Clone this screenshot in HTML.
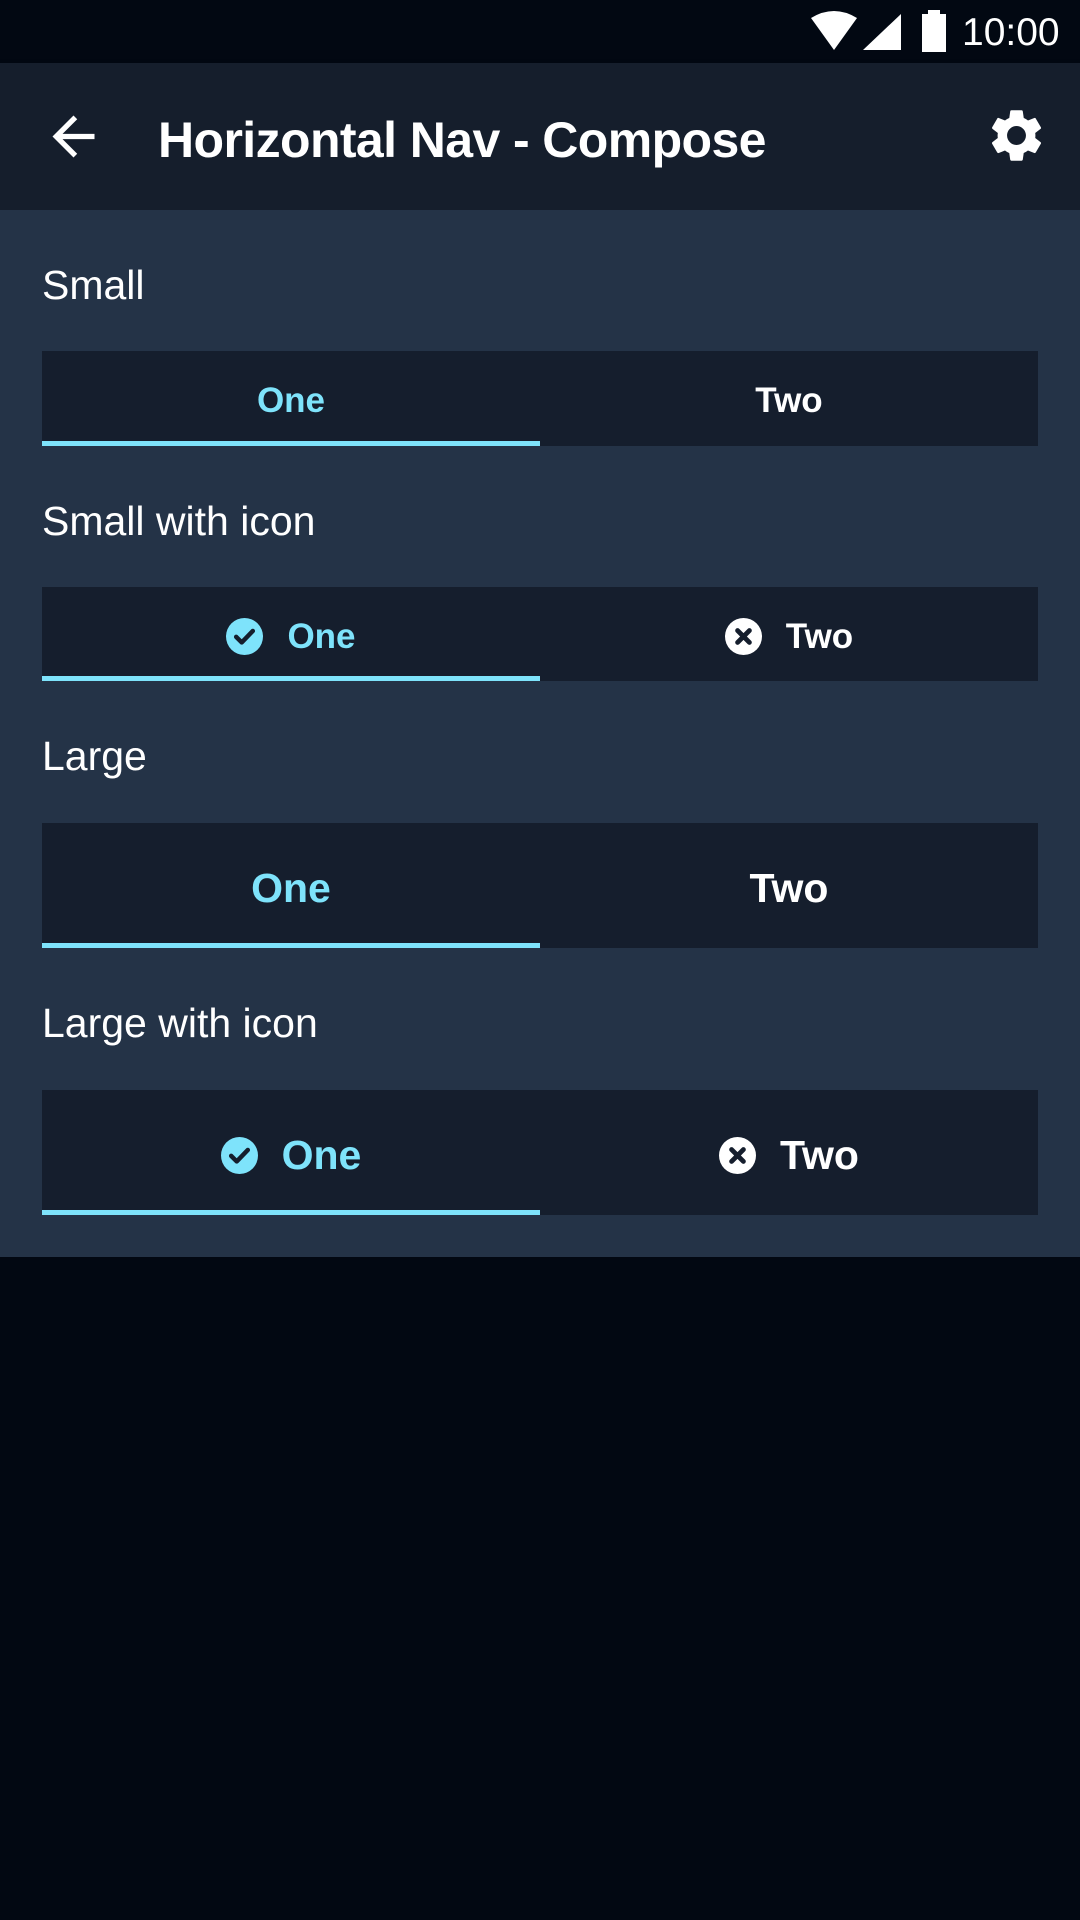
<!DOCTYPE html>
<html><head><meta charset="utf-8"><style>
*{margin:0;padding:0;box-sizing:border-box}
body{width:1080px;height:1920px;background:#020812;position:relative;overflow:hidden;font-family:"Liberation Sans",sans-serif;color:#fff}
.abs{position:absolute}
.content{left:0;top:210px;width:1080px;height:1047px;background:#243347}
.appbar{left:0;top:63px;width:1080px;height:147px;background:#151e2c;box-shadow:0 3px 6px rgba(0,0,0,.35)}
.label{position:absolute;left:42px;font-size:41px;line-height:50px}
.tabs{position:absolute;left:42px;width:996px;background:#151e2d;display:flex}
.tab{flex:1;display:flex;align-items:center;justify-content:center;font-weight:bold;position:relative;padding-top:5px}
.sel{color:#7ee3fb}
.sel::after{content:"";position:absolute;left:0;right:0;bottom:0;height:5px;background:#7ee3fb}
.tab svg{margin-right:24px}
</style></head><body>
<div class="abs" style="left:0;top:0;width:1080px;height:63px;background:#020812"></div>
<svg class="abs" style="left:808px;top:10px" width="52" height="42" viewBox="0 0 52 42"><path d="M3 8 Q26 -6 49 8 L26 40 Z" fill="#fff"/></svg>
<svg class="abs" style="left:863px;top:14px" width="40" height="36"><path d="M0 36 L38 0 L38 36 Z" fill="#fff"/></svg>
<svg class="abs" style="left:921px;top:10px" width="26" height="42"><rect x="7" y="0" width="12" height="5" fill="#fff"/><rect x="1" y="4" width="24" height="38" fill="#fff"/></svg>
<div class="abs" style="left:962px;top:9px;font-size:39px;line-height:48px">10:00</div>
<div class="abs appbar"></div>
<svg class="abs" style="left:42px;top:105px" width="63" height="63" viewBox="0 0 24 24"><path d="M20 11H7.83l5.59-5.59L12 4l-8 8 8 8 1.41-1.41L7.83 13H20v-2z" fill="#fff"/></svg>
<div class="abs" style="left:158px;top:109px;font-size:50px;line-height:62px;font-weight:bold;letter-spacing:-0.6px">Horizontal Nav - Compose</div>
<svg class="abs" style="left:985px;top:104px" width="63" height="63" viewBox="0 0 24 24"><path fill="#fff" d="M19.14 12.94c.04-.3.06-.61.06-.94 0-.32-.02-.64-.07-.94l2.03-1.58a.49.49 0 0 0 .12-.61l-1.920-3.32a.488.488 0 0 0-.59-.22l-2.39.96c-.5-.38-1.03-.7-1.62-.94l-.36-2.540a.484.484 0 0 0-.48-.41h-3.84c-.24 0-.43.17-.47.41l-.36 2.54c-.59.24-1.13.57-1.62.94l-2.39-.96c-.22-.08-.47 0-.59.22L2.74 8.87c-.12.21-.08.47.12.61l2.03 1.58c-.05.3-.09.63-.09.94s.02.64.07.94l-2.03 1.58a.49.49 0 0 0-.12.61l1.92 3.32c.12.22.37.29.59.22l2.39-.96c.5.38 1.03.7 1.62.94l.36 2.54c.05.24.24.41.48.41h3.84c.24 0 .44-.17.47-.41l.36-2.54c.59-.24 1.13-.56 1.62-.94l2.39.96c.22.08.47 0 .59-.22l1.92-3.32c.12-.22.07-.47-.12-.61l-2.01-1.58zM12 15.6c-1.98 0-3.6-1.62-3.6-3.6s1.62-3.6 3.6-3.6 3.6 1.62 3.6 3.6-1.62 3.6-3.6 3.6z"/></svg>
<div class="abs content"></div>

<div class="label" style="top:260px">Small</div>
<div class="tabs" style="top:351px;height:95px;font-size:35px">
 <div class="tab sel">One</div><div class="tab">Two</div></div>

<div class="label" style="top:496px">Small with icon</div>
<div class="tabs" style="top:587px;height:94px;font-size:35px">
 <div class="tab sel"><svg width="37" height="37" viewBox="0 0 20 20"><circle cx="10" cy="10" r="10" fill="#7ee3fb"/><path d="M5.5 10.2l3 3 6-6.2" stroke="#151e2d" stroke-width="2.4" fill="none" stroke-linecap="round" stroke-linejoin="round"/></svg>One</div>
 <div class="tab"><svg width="37" height="37" viewBox="0 0 20 20"><circle cx="10" cy="10" r="10" fill="#fff"/><path d="M6.8 6.8l6.4 6.4M13.2 6.8l-6.4 6.4" stroke="#151e2d" stroke-width="2.6" stroke-linecap="round"/></svg>Two</div></div>

<div class="label" style="top:731px">Large</div>
<div class="tabs" style="top:823px;height:125px;font-size:41px">
 <div class="tab sel">One</div><div class="tab">Two</div></div>

<div class="label" style="top:998px">Large with icon</div>
<div class="tabs" style="top:1090px;height:125px;font-size:41px">
 <div class="tab sel"><svg width="37" height="37" viewBox="0 0 20 20"><circle cx="10" cy="10" r="10" fill="#7ee3fb"/><path d="M5.5 10.2l3 3 6-6.2" stroke="#151e2d" stroke-width="2.4" fill="none" stroke-linecap="round" stroke-linejoin="round"/></svg>One</div>
 <div class="tab"><svg width="37" height="37" viewBox="0 0 20 20"><circle cx="10" cy="10" r="10" fill="#fff"/><path d="M6.8 6.8l6.4 6.4M13.2 6.8l-6.4 6.4" stroke="#151e2d" stroke-width="2.6" stroke-linecap="round"/></svg>Two</div></div>
</body></html>
